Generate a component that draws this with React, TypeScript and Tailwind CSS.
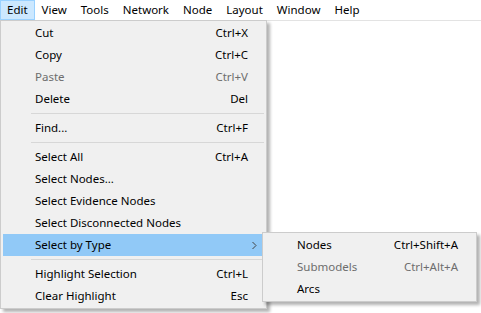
import React from "react";

type Item =
  | { type: "item"; label: string; shortcut?: string; disabled?: boolean; active?: boolean; sub?: boolean }
  | { type: "sep" };

const mainItems: Item[] = [
  { type: "item", label: "Cut", shortcut: "Ctrl+X" },
  { type: "item", label: "Copy", shortcut: "Ctrl+C" },
  { type: "item", label: "Paste", shortcut: "Ctrl+V", disabled: true },
  { type: "item", label: "Delete", shortcut: "Del" },
  { type: "sep" },
  { type: "item", label: "Find...", shortcut: "Ctrl+F" },
  { type: "sep" },
  { type: "item", label: "Select All", shortcut: "Ctrl+A" },
  { type: "item", label: "Select Nodes..." },
  { type: "item", label: "Select Evidence Nodes" },
  { type: "item", label: "Select Disconnected Nodes" },
  { type: "item", label: "Select by Type", active: true, sub: true },
  { type: "sep" },
  { type: "item", label: "Highlight Selection", shortcut: "Ctrl+L" },
  { type: "item", label: "Clear Highlight", shortcut: "Esc" },
];

const subItems: Item[] = [
  { type: "item", label: "Nodes", shortcut: "Ctrl+Shift+A" },
  { type: "item", label: "Submodels", shortcut: "Ctrl+Alt+A", disabled: true },
  { type: "item", label: "Arcs" },
];

function MenuRows({ items }: { items: Item[] }) {
  return (
    <>
      {items.map((it, i) =>
        it.type === "sep" ? (
          <div key={i} className="h-[7px] flex items-center pl-[28px]">
            <div className="h-px w-full bg-[#d7d7d7]" />
          </div>
        ) : (
          <div
            key={i}
            className={
              "relative h-[22px] flex items-center pl-[32px] pr-[16px] " +
              (it.active ? "bg-[#91c9f7] " : "") +
              (it.disabled ? "text-[#6d6d6d]" : "text-black")
            }
          >
            <span className="flex-1 whitespace-nowrap">{it.label}</span>
            {it.shortcut && <span className="whitespace-nowrap">{it.shortcut}</span>}
            {it.sub && (
              <svg
                className="absolute right-[7px] top-[7px]"
                width="6"
                height="9"
                viewBox="0 0 6 9"
              >
                <path d="M1.5 1 L5 4.5 L1.5 8" fill="none" stroke="#444" strokeWidth="1" />
              </svg>
            )}
          </div>
        )
      )}
    </>
  );
}

export default function App() {
  const bar = ["Edit", "View", "Tools", "Network", "Node", "Layout", "Window", "Help"];
  return (
    <div
      className="relative w-[481px] h-[313px] overflow-hidden bg-white text-[11.5px] leading-none"
      style={{ fontFamily: '"Noto Sans", "Open Sans", sans-serif' }}
    >
      <div className="flex h-[20px] items-stretch">
        {bar.map((b, i) => (
          <div
            key={b}
            className={
              "flex items-center px-[6px] border " +
              (i === 0 ? "bg-[#cce8ff] border-[#99d1ff]" : "border-transparent")
            }
          >
            {b}
          </div>
        ))}
      </div>
      <div className="h-[293px] border-t border-[#e3e3e3] bg-white" />

      <div className="absolute left-0 top-[20px] w-[267px] border border-[#cccccc] bg-[#f0f0f0] px-[2px] py-px shadow-[3px_3px_3px_rgba(0,0,0,0.3)]">
        <MenuRows items={mainItems} />
      </div>

      <div className="absolute left-[262px] top-[232px] w-[215px] border border-[#cccccc] bg-[#f0f0f0] px-[2px] py-px shadow-[3px_3px_3px_rgba(0,0,0,0.3)]">
        <MenuRows items={subItems} />
      </div>
    </div>
  );
}
